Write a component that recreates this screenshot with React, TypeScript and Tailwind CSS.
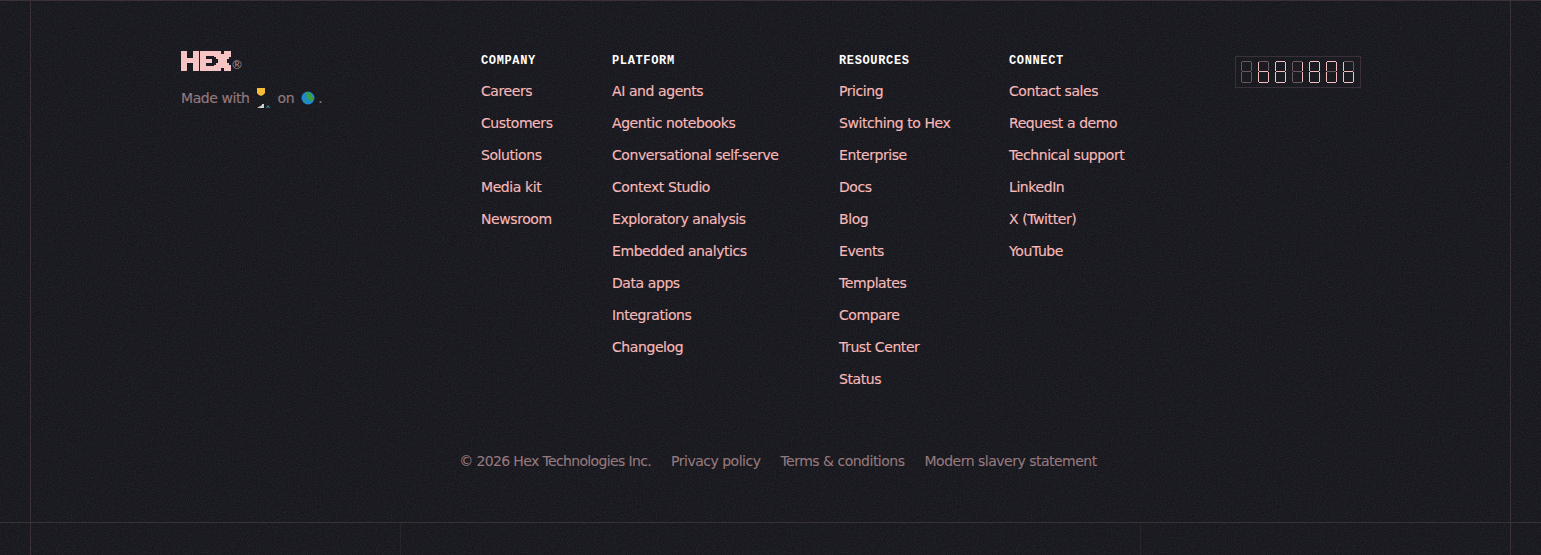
import React from 'react';

const columns = [
  {
    title: 'COMPANY',
    width: 'w-[131px]',
    links: ['Careers', 'Customers', 'Solutions', 'Media kit', 'Newsroom'],
  },
  {
    title: 'PLATFORM',
    width: 'w-[227px]',
    links: [
      'AI and agents',
      'Agentic notebooks',
      'Conversational self-serve',
      'Context Studio',
      'Exploratory analysis',
      'Embedded analytics',
      'Data apps',
      'Integrations',
      'Changelog',
    ],
  },
  {
    title: 'RESOURCES',
    width: 'w-[170px]',
    links: [
      'Pricing',
      'Switching to Hex',
      'Enterprise',
      'Docs',
      'Blog',
      'Events',
      'Templates',
      'Compare',
      'Trust Center',
      'Status',
    ],
  },
  {
    title: 'CONNECT',
    width: 'w-[226px]',
    links: ['Contact sales', 'Request a demo', 'Technical support', 'LinkedIn', 'X (Twitter)', 'YouTube'],
  },
];

const legal = ['Privacy policy', 'Terms & conditions', 'Modern slavery statement'];

// lit segments per digit: top, top-left, top-right, middle, bottom-left, bottom-right, bottom
const counter: boolean[][] = [
  [false, false, false, false, false, false, false],
  [false, true, false, true, true, true, true],
  [true, true, true, true, true, true, true],
  [false, false, true, false, false, true, false],
  [true, true, true, true, true, true, true],
  [true, true, true, false, true, true, true],
  [false, true, false, true, true, true, true],
];

const Digit = ({ lit }: { lit: boolean[] }) => {
  const color = (on: boolean) => (on ? '#f4bfbf' : '#6a5a60');
  return (
    <svg width="11" height="22" viewBox="0 0 11 22" className="block">
      <path d="M1 0.5H10" stroke={color(lit[0])} />
      <path d="M0.5 1V10" stroke={color(lit[1])} />
      <path d="M10.5 1V10" stroke={color(lit[2])} />
      <path d="M1 10.5H10" stroke={color(lit[3])} />
      <path d="M0.5 11V21" stroke={color(lit[4])} />
      <path d="M10.5 11V21" stroke={color(lit[5])} />
      <path d="M1 21.5H10" stroke={color(lit[6])} />
    </svg>
  );
};

const HexLogo = () => (
  <svg width="50" height="20" viewBox="0 0 50 20" className="block" fill="#f6c4c4">
    <path d="M0 0H6V7H12V0H18V20H12V12H6V20H0Z" />
    <path d="M19 0H33V5H25V8H31V12H25V15H33V20H19Z" />
    <path d="M33 0H40V3H43V0H50V6H48V8H46V12H48V14H50V20H43V17H40V20H33V14H35V12H37V8H35V6H33Z" />
  </svg>
);

const Globe = () => (
  <svg width="14" height="14" viewBox="0 0 14 14" className="block">
    <circle cx="7" cy="7" r="6.5" fill="#1e88d4" />
    <path d="M5 1.5C7 .8 10 1.5 11 3.5 10.5 5 11.5 6 12.5 7.5 12 9 11 10 10 11 9 10 8.5 8.5 7 8 5.5 7.5 5 6 5.8 4.5Z" fill="#3f9f3a" />
    <path d="M2 9C3 8.8 4.5 10 5 12 4 12 2.5 10.5 2 9Z" fill="#3f9f3a" />
  </svg>
);

const Maker = () => (
  <svg width="16" height="22" viewBox="0 0 16 22" className="block">
    <path d="M1 1H9V5.5C9 7 7 8 5 9C3 8 1 7 1 5.5Z" fill="#f5bd3a" />
    <path d="M1 21L6 18V17H8V21Z" fill="#cfcfcf" />
    <path d="M10 21L12 18L14 21H13L12 19.5L11 21Z" fill="#2a9db8" />
  </svg>
);

const App = () => {
  return (
    <div
      className="relative h-[555px] overflow-hidden bg-[#101017]"
      style={{ fontFamily: '"DejaVu Sans", sans-serif' }}
    >
      {/* film grain over the whole footer */}
      <svg className="pointer-events-none absolute inset-0 h-full w-full opacity-[0.13]">
        <filter id="grain">
          <feTurbulence type="fractalNoise" baseFrequency="0.8" numOctaves="2" stitchTiles="stitch" />
          <feColorMatrix type="saturate" values="0" />
        </filter>
        <rect width="100%" height="100%" filter="url(#grain)" />
      </svg>

      {/* page guide lines */}
      <div className="pointer-events-none absolute inset-y-0 left-[30px] right-[30px] border-x border-[#3a3037]" />
      <div className="pointer-events-none absolute bottom-0 left-[400px] top-[522px] w-px bg-[#29242a]" />
      <div className="pointer-events-none absolute bottom-0 left-[1140px] top-[522px] w-px bg-[#29242a]" />

      <footer className="relative border-t border-[#3a3037]">
        <div className="border-b border-[#3a3037]">
          <div className="flex h-[450px] pl-[181px] pt-[49px]">
            <div className="w-[300px]">
              <div className="mt-[1px] flex items-end">
                <HexLogo />
                <span className="text-[12px] leading-[12px] text-[#a8929a]">®</span>
              </div>
              <div className="mt-[15px] flex h-[24px] items-center text-[14px] tracking-[-0.42px] text-[#96797e] [-webkit-text-stroke:0.15px]">
                <span>Made with</span>
                <span className="ml-[6px]">
                  <Maker />
                </span>
                <span className="ml-[6px]">on</span>
                <span className="ml-[7px]">
                  <Globe />
                </span>
                <span className="ml-[3px]">.</span>
              </div>
            </div>

            {columns.map((col) => (
              <div key={col.title} className={col.width}>
                <h4
                  className="h-[23px] text-[12px] font-bold leading-[23px] tracking-[0.64px] text-white"
                  style={{ fontFamily: '"Liberation Mono", monospace' }}
                >
                  {col.title}
                </h4>
                <ul className="mt-[6px]">
                  {col.links.map((link) => (
                    <li
                      key={link}
                      className="h-[32px] text-[14px] leading-[24px] tracking-[-0.42px] text-[#f5b9b9] [-webkit-text-stroke:0.15px]"
                    >
                      {link}
                    </li>
                  ))}
                </ul>
              </div>
            ))}

            <div className="mt-[6px] flex h-[32px] w-[126px] items-center gap-[6px] border border-[#3a3037] pl-[5px]">
              {counter.map((lit, i) => (
                <Digit key={i} lit={lit} />
              ))}
            </div>
          </div>

          <div className="ml-[15px] flex h-[71px] justify-center gap-[20px] text-[14px] leading-[20px] tracking-[-0.5px] text-[#96797e] [-webkit-text-stroke:0.1px]">
            <span className="tracking-[-0.64px]">© 2026 Hex Technologies Inc.</span>
            {legal.map((item) => (
              <span key={item}>{item}</span>
            ))}
          </div>
        </div>
      </footer>
    </div>
  );
};

export default App;
